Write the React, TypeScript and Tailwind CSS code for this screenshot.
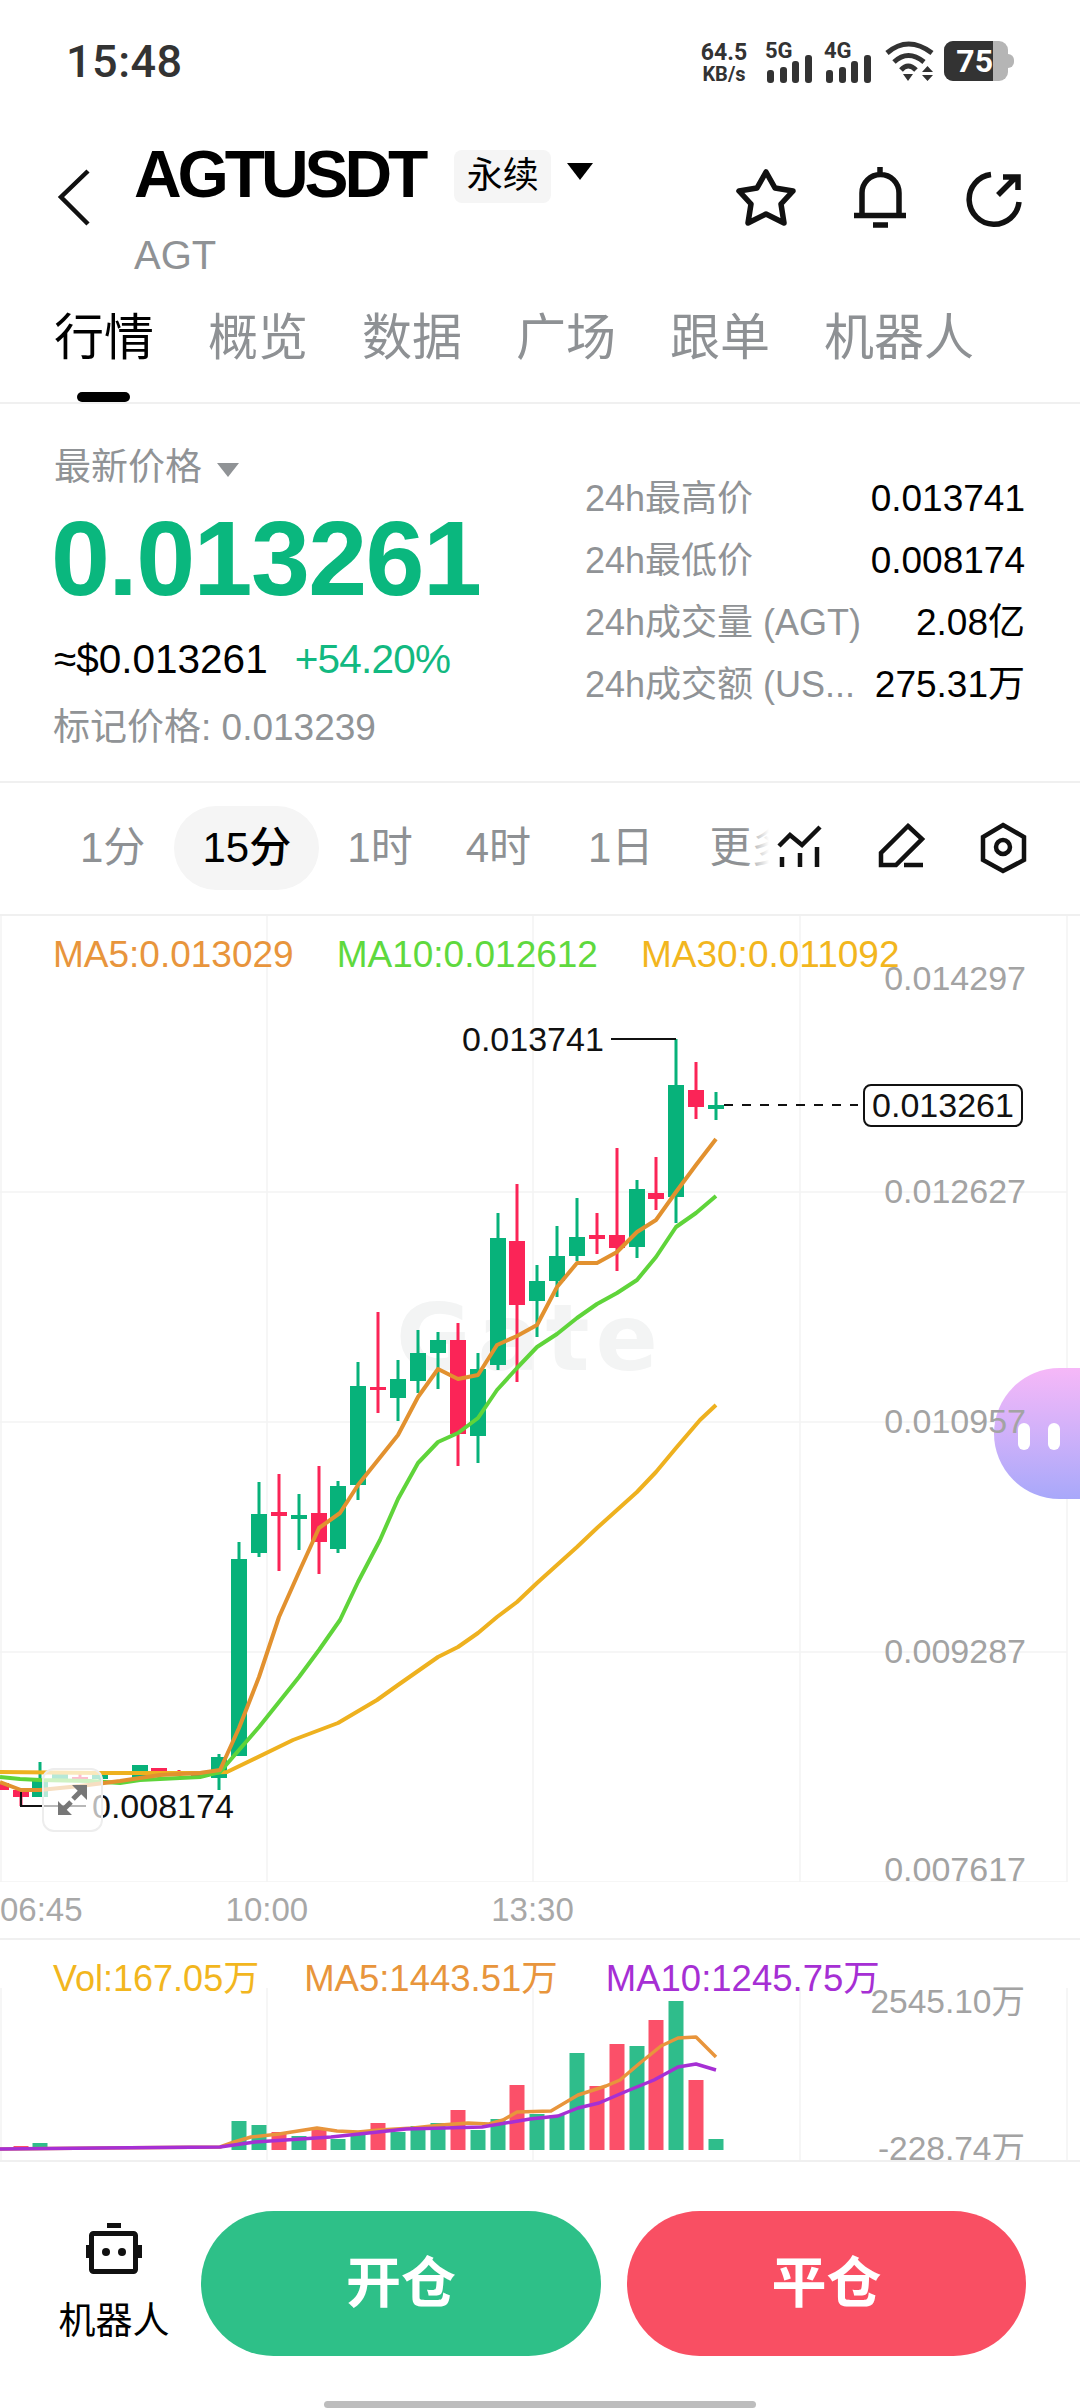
const sans = "font-['Liberation_Sans','Noto_Sans_CJK_SC',sans-serif]"

// x, wick top, wick bottom, body top, body bottom, up?
const candles: [number, number, number, number, number, boolean][] = [
  [1, 1783, 1790, 1783, 1790, false],
  [21, 1790, 1806, 1790, 1797, false],
  [40, 1762, 1797, 1780, 1797, true],
  [60, 1772, 1782, 1774, 1780, true],
  [80, 1774, 1782, 1777, 1780, false],
  [100, 1772, 1780, 1774, 1779, true],
  [140, 1765, 1778, 1765, 1778, true],
  [159, 1768, 1778, 1768, 1775, false],
  [179, 1770, 1776, 1772, 1775, false],
  [199, 1771, 1778, 1772, 1776, false],
  [219, 1754, 1790, 1757, 1778, true],
  [239, 1542, 1756, 1559, 1756, true],
  [259, 1482, 1557, 1514, 1553, true],
  [279, 1474, 1571, 1512, 1516, false],
  [299, 1494, 1550, 1515, 1519, true],
  [319, 1466, 1574, 1513, 1542, false],
  [338, 1481, 1553, 1486, 1549, true],
  [358, 1362, 1500, 1386, 1485, true],
  [378, 1312, 1413, 1387, 1390, false],
  [398, 1360, 1421, 1379, 1398, true],
  [418, 1330, 1393, 1353, 1381, true],
  [438, 1332, 1389, 1340, 1353, true],
  [458, 1323, 1466, 1340, 1434, false],
  [478, 1353, 1463, 1369, 1436, true],
  [498, 1213, 1370, 1238, 1365, true],
  [517, 1184, 1382, 1241, 1305, false],
  [537, 1265, 1337, 1281, 1301, true],
  [557, 1226, 1297, 1256, 1281, true],
  [577, 1198, 1261, 1237, 1256, true],
  [597, 1213, 1254, 1235, 1239, false],
  [617, 1148, 1271, 1235, 1248, false],
  [637, 1180, 1258, 1189, 1247, true],
  [656, 1157, 1210, 1193, 1199, false],
  [676, 1039, 1223, 1085, 1197, true],
  [696, 1062, 1119, 1090, 1107, false],
  [716, 1092, 1120, 1105, 1109, true],
]

const ma5 = '0,1782 21,1790 40,1790 80,1786 120,1781 160,1775 200,1773 220,1770 239,1728 259,1677 279,1617 299,1572 319,1528 340,1513 358,1485 378,1460 398,1435 418,1397 438,1369 458,1379 478,1375 497,1345 517,1336 537,1325 557,1287 577,1263 597,1263 617,1252 637,1232 656,1220 676,1192 696,1165 716,1139'
const ma10 = '0,1777 20,1779 40,1780 90,1781 120,1783 140,1780 200,1777 220,1772 239,1750 259,1727 279,1702 299,1677 319,1650 340,1620 358,1582 380,1540 398,1499 418,1463 438,1442 458,1433 478,1418 497,1390 517,1368 537,1347 557,1334 577,1318 597,1304 617,1293 637,1280 656,1257 676,1227 696,1213 716,1196'
const ma30 = '0,1772 100,1773 200,1773 227,1772 293,1740 338,1723 377,1700 398,1685 438,1657 458,1647 478,1633 497,1617 517,1602 537,1583 557,1565 577,1547 597,1528 617,1510 637,1492 656,1472 676,1448 700,1420 716,1405'

// x, top, up?
const bars: [number, number, boolean][] = [
  [21, 2146, false], [40, 2143, true], [239, 2121, true], [259, 2125, true], [279, 2132, false], [299, 2136, true],
  [319, 2128, false], [338, 2139, true], [358, 2135, true], [378, 2123, false], [398, 2132, true], [418, 2126, true],
  [438, 2123, true], [458, 2110, false], [478, 2130, true], [498, 2119, true], [517, 2085, false], [537, 2114, true],
  [557, 2115, true], [577, 2053, true], [597, 2086, false], [617, 2044, false], [637, 2046, true], [656, 2020, false],
  [676, 2001, true], [696, 2080, false], [716, 2139, true],
]
const volMa5 = '0,2149 100,2148 220,2147 234,2142 251,2137 279,2134 317,2128 337,2131 358,2132 379,2130 413,2128 441,2125 468,2123 489,2124 503,2120 517,2112 551,2111 578,2095 606,2086 620,2080 640,2063 661,2046 678,2038 696,2037 716,2057'
const volMa10 = '0,2149 100,2148 220,2147 255,2142 331,2137 406,2129 482,2127 530,2119 558,2116 578,2108 599,2103 627,2091 654,2080 678,2067 696,2064 716,2070'

function Signal({ label }: { label: string }) {
  return (
    <div className="w-[46px] h-[42px] relative">
      <div className="font-['Roboto',sans-serif] font-bold text-[22px] leading-[20px] text-[#333]">{label}</div>
      <svg viewBox="0 0 46 28" className="absolute bottom-0 left-[2px] w-[46px] h-[28px]" fill="#333">
        <rect x="0" y="15" width="7" height="13" rx="3" />
        <rect x="13" y="12" width="7" height="16" rx="3" />
        <rect x="25" y="6" width="7" height="22" rx="3" />
        <rect x="38" y="0" width="7" height="28" rx="3" />
      </svg>
    </div>
  )
}

function StatusBar() {
  return (
    <div className="h-[124px] flex items-center justify-between pl-[66px] pr-[66px]">
      <span className="font-['Roboto',sans-serif] font-medium text-[45px] text-[#333] tracking-[0.5px]">15:48</span>
      <div className="flex items-center">
        <div className="w-[54px] text-center font-['Roboto',sans-serif] font-bold text-[#333] mr-[14px]">
          <div className="text-[23px] leading-[23px]">64.5</div>
          <div className="text-[20px] leading-[20px]">KB/s</div>
        </div>
        <Signal label="5G" />
        <div className="w-[13px]" />
        <Signal label="4G" />
        <svg viewBox="884 42 50 42" className="w-[50px] h-[42px] ml-[14px]">
          <g fill="none" stroke="#333" strokeWidth="5">
            <path d="M887 54 Q908 36 932 54" />
            <path d="M894 63 Q908 50 924 63" />
            <path d="M901 71 Q908 63 916 71" />
          </g>
          <path d="M903 75 H913 L908 82 Z M922 73 L927.5 67 L933 73 Z M922 76 H933 L927.5 82 Z" fill="#333" />
        </svg>
        <div className="relative ml-[10px] w-[70px] h-[42px]">
          <div className="w-[64px] h-[40px] rounded-[9px] bg-[#b5b5b5] overflow-hidden">
            <div className="w-[49px] h-full bg-[#333] flex items-center justify-end">
              <span className="font-['Roboto',sans-serif] font-bold text-[32px] text-white">75</span>
            </div>
          </div>
          <div className="absolute right-0 top-[13px] w-[6px] h-[14px] rounded-r-md bg-[#b5b5b5]" />
        </div>
      </div>
    </div>
  )
}

function Header() {
  return (
    <div className="h-[166px] flex relative">
      <svg viewBox="56 167 38 62" className="w-[38px] h-[62px] ml-[56px] mt-[43px]" fill="none" stroke="#111" strokeWidth="4.5">
        <path d="M88 171 L61 197 L88 224" />
      </svg>
      <div className="ml-[40px]">
        <div className="flex items-center h-[52px] mt-[24px]">
          <span className="font-bold text-[66px] tracking-[-4.1px] text-black leading-none">AGTUSDT</span>
          <span className="ml-[30px] w-[97px] h-[53px] mt-[4px] rounded-lg bg-[#f5f5f5] flex items-center justify-center text-[36px] text-black">永续</span>
          <span className="ml-[16px] w-0 h-0 border-x-[13px] border-x-transparent border-t-[17px] border-t-black -mt-[6px]" />
        </div>
        <div className="text-[40px] text-[#8f9295] leading-none mt-[35px]">AGT</div>
      </div>
      <svg viewBox="730 160 300 72" className="absolute left-[728px] top-[36px] w-[300px] h-[72px]" fill="none" stroke="#111" strokeWidth="5.5">
        <path strokeLinejoin="round" d="M768 172 L777 188 L795 191 L783 204 L786 223 L768 214 L750 223 L753 204 L741 191 L759 188 Z" />
        <path d="M864 215 V193 a18.5 18.5 0 0 1 37 0 V215 M856 215.5 H908 M882 167 V174 M875 225 H890" />
        <path d="M993 174.5 A25 25 0 1 0 1021 202 M1000 195 L1018 177 M1005 177 H1020 V190" />
      </svg>
    </div>
  )
}

function Tabs() {
  const items = ['行情', '概览', '数据', '广场', '跟单', '机器人']
  return (
    <div className="h-[114px] border-b-2 border-[#f0f0f0] relative flex gap-[54px] pl-[54px] pt-[19px]">
      {items.map((t, i) => (
        <span key={t} className={`text-[50px] leading-[58px] ${i === 0 ? 'text-black' : 'text-[#8e9194]'}`}>{t}</span>
      ))}
      <div className="absolute left-[77px] bottom-0 w-[53px] h-[10px] rounded-full bg-black" />
    </div>
  )
}

function StatRow({ label, value }: { label: string; value: string }) {
  return (
    <div className="h-[62px] flex items-center justify-between">
      <span className="text-[36px] text-[#909396]">{label}</span>
      <span className="text-[37px] text-black">{value}</span>
    </div>
  )
}

function PriceInfo() {
  return (
    <div className="h-[379px] border-b-2 border-[#f0f0f0] flex">
      <div className="w-[585px] pl-[54px] pt-[46px]">
        <div className="h-[36px] flex items-center text-[37px] text-[#909396]">
          最新价格
          <span className="ml-[15px] mt-[3px] w-0 h-0 border-x-[11px] border-x-transparent border-t-[14px] border-t-[#909396]" />
        </div>
        <div className="h-[104px] mt-[20px] -ml-[3px] flex items-center font-bold text-[106px] text-[#0ab77e] tracking-[-1.6px] leading-none">0.013261</div>
        <div className="h-[48px] mt-[25px] flex items-center text-[40.5px]">
          <span className="text-black">≈$0.013261</span>
          <span className="ml-[27px] text-[#12b981] tracking-[-0.8px]">+54.20%</span>
        </div>
        <div className="h-[40px] mt-[25px] -ml-[1px] flex items-center text-[37px] text-[#909396]">标记价格: 0.013239</div>
      </div>
      <div className="w-[440px] pt-[64px]">
        <StatRow label="24h最高价" value="0.013741" />
        <StatRow label="24h最低价" value="0.008174" />
        <StatRow label="24h成交量 (AGT)" value="2.08亿" />
        <StatRow label="24h成交额 (US..." value="275.31万" />
      </div>
    </div>
  )
}

function Timeframes() {
  return (
    <div className="h-[133px] border-b-2 border-[#f0f0f0] flex items-center text-[42px] text-[#8e9194] relative pb-[2px]">
      <span className="ml-[80px]">1分</span>
      <span className="ml-[29px] w-[145px] h-[84px] rounded-full bg-[#f5f5f5] flex items-center justify-center text-black font-medium">15分</span>
      <span className="ml-[28px]">1时</span>
      <span className="ml-[53px]">4时</span>
      <span className="ml-[57px]">1日</span>
      <div className="ml-[56px] w-[60px] h-[50px] overflow-hidden relative whitespace-nowrap leading-[50px]">
        更多
        <div className="absolute inset-y-0 right-0 w-[24px] bg-gradient-to-r from-white/0 to-white" />
      </div>
      <svg viewBox="775 820 255 56" className="absolute left-[774px] top-[37px] w-[255px] h-[56px]" fill="none" stroke="#111" strokeWidth="4.5">
        <path d="M780 846 L791 835 L803 845 L821 827 M783 857 V867 M801 853 V867 M818 847 V867" />
        <path d="M909 826 L923 839 L897 865 H882 V853 Z M905 865 H924" />
        <path d="M1004 825 L1025 837 V860 L1004 871 L984 860 V837 Z" />
        <circle cx="1004" cy="847" r="7" />
      </svg>
    </div>
  )
}

function CandleChart() {
  return (
    <div className="h-[966px] relative overflow-hidden">
      <div className="absolute left-[396px] top-[377px] font-['DejaVu_Sans',sans-serif] font-bold text-[92px] tracking-[6px] text-[#f3f4f4] leading-none">Gate</div>
      <svg viewBox="0 916 1080 966" className="absolute inset-0 w-[1080px] h-[966px]" fill="none">
        <g stroke="#f3f4f4" strokeWidth="1.5">
          <path d="M1 916 V1882 M267 916 V1882 M533 916 V1882 M800 916 V1882 M1067 916 V1882" />
          <path d="M0 1192 H1067 M0 1422 H1067 M0 1652 H1067 M0 1882 H1067" />
        </g>
        {candles.map(([x, wt, wb, bt, bb, up]) => {
          const color = up ? '#07b27a' : '#fb2457'
          return (
            <g key={x} fill={color}>
              <rect x={x - 1.5} y={wt} width="3" height={wb - wt} />
              <rect x={x - 8} y={bt} width="16" height={bb - bt} />
            </g>
          )
        })}
        <polyline points={ma30} stroke="#eeb11f" strokeWidth="4" strokeLinejoin="round" />
        <polyline points={ma10} stroke="#5fd43a" strokeWidth="4" strokeLinejoin="round" />
        <polyline points={ma5} stroke="#e2912f" strokeWidth="4" strokeLinejoin="round" />
        <path d="M611 1039 H676" stroke="#111" strokeWidth="2" />
        <path d="M21 1792 V1806 H86" stroke="#111" strokeWidth="2" />
        <path d="M724 1105 H858" stroke="#111" strokeWidth="2" strokeDasharray="9 9" />
      </svg>

      <div className="relative flex gap-[43px] pl-[53px] pt-[16px] text-[37px] leading-[46px]">
        <span className="text-[#e8953c]">MA5:0.013029</span>
        <span className="text-[#5fd93e]">MA10:0.012612</span>
        <span className="text-[#f2b61e]">MA30:0.011092</span>
      </div>

      <div className="absolute left-[994px] top-[452px] w-[86px] h-[131px] rounded-l-full bg-gradient-to-b from-[#f6b8f8] to-[#a8a8fa] flex items-center gap-[18px] pl-[24px] pt-[6px]">
        <div className="w-[12px] h-[27px] rounded-full bg-white" />
        <div className="w-[12px] h-[27px] rounded-full bg-white" />
      </div>

      <div className="absolute right-[54px] top-[62px] -translate-y-1/2 text-[34px] text-[#a3a3a3]">0.014297</div>
      <div className="absolute right-[54px] top-[275px] -translate-y-1/2 text-[34px] text-[#a3a3a3]">0.012627</div>
      <div className="absolute right-[54px] top-[505px] -translate-y-1/2 text-[34px] text-[#a3a3a3]">0.010957</div>
      <div className="absolute right-[54px] top-[735px] -translate-y-1/2 text-[34px] text-[#a3a3a3]">0.009287</div>
      <div className="absolute right-[54px] top-[953px] -translate-y-1/2 text-[34px] leading-none text-[#a3a3a3]">0.007617</div>

      <div className="absolute left-[462px] top-[123px] -translate-y-1/2 text-[34px] text-[#111]">0.013741</div>
      <div className="absolute left-[92px] top-[890px] -translate-y-1/2 text-[34px] text-[#111]">0.008174</div>
      <div className="absolute left-[863px] top-[168px] w-[160px] h-[43px] rounded-lg border-2 border-[#111] bg-white flex items-center justify-center text-[34px] text-[#111]">0.013261</div>

      <div className="absolute left-[42px] top-[852px] w-[61px] h-[64px] rounded-xl border-2 border-[#ededed] bg-white/70">
        <svg viewBox="0 0 61 64" className="absolute -left-[2px] -top-[2px] w-[61px] h-[64px]" fill="#777">
          <path d="M45 17 V32 L30 17 Z M16 47 V33 L30 47 Z" />
          <path d="M39 23 L31 31 M22 41 L29 34" stroke="#777" strokeWidth="5" />
        </svg>
      </div>
    </div>
  )
}

function TimeAxis() {
  return (
    <div className="h-[58px] border-b-2 border-[#f0f0f0] flex items-center text-[33px] text-[#a8a8a8]">
      <span>06:45</span>
      <span className="ml-[143px]">10:00</span>
      <span className="ml-[183px]">13:30</span>
    </div>
  )
}

function VolumeChart() {
  return (
    <div className="h-[222px] border-b-2 border-[#f0f0f0] relative overflow-hidden">
      <svg viewBox="0 1940 1080 220" className="absolute inset-0 w-[1080px] h-[220px]" fill="none">
        <path d="M1 1988 V2160 M267 1988 V2160 M533 1988 V2160 M800 1988 V2160 M1067 1988 V2160" stroke="#f3f4f4" strokeWidth="1.5" />
        {bars.map(([x, top, up]) => (
          <rect key={x} x={x - 7.5} y={top} width="15" height={2150 - top} fill={up ? '#2fbd8b' : '#fb5069'} />
        ))}
        <polyline points={volMa5} stroke="#e8953c" strokeWidth="3.5" strokeLinejoin="round" />
        <polyline points={volMa10} stroke="#a62fd4" strokeWidth="3.5" strokeLinejoin="round" />
      </svg>
      <div className="relative flex pl-[53px] pt-[16px] text-[36.5px] leading-[46px]">
        <span className="text-[#f2b61e] text-[36px]">Vol:167.05万</span>
        <span className="ml-[45px] text-[#e8953c]">MA5:1443.51万</span>
        <span className="ml-[48px] text-[#a62fd4]">MA10:1245.75万</span>
      </div>
      <div className="absolute right-[55px] top-[62px] -translate-y-1/2 text-[33.5px] text-[#a3a3a3]">2545.10万</div>
      <div className="absolute right-[55px] top-[209px] -translate-y-1/2 text-[33.5px] text-[#a3a3a3]">-228.74万</div>
    </div>
  )
}

function BottomBar() {
  return (
    <div className="h-[246px] relative flex pt-[49px] pl-[60px]">
      <div className="w-[108px] flex flex-col items-center pt-[12px]">
        <svg viewBox="86 2223 56 52" className="w-[56px] h-[52px]" fill="none">
          <rect x="107" y="2223" width="14" height="5" fill="#111" />
          <rect x="91.5" y="2233.5" width="44" height="38" rx="2" stroke="#111" strokeWidth="5" />
          <rect x="86" y="2245" width="4" height="13" fill="#111" />
          <rect x="138" y="2245" width="4" height="13" fill="#111" />
          <circle cx="106" cy="2252" r="4" fill="#111" />
          <circle cx="122" cy="2252" r="4" fill="#111" />
        </svg>
        <span className="mt-[27px] text-[37px] leading-[40px] text-black whitespace-nowrap">机器人</span>
      </div>
      <button className="ml-[33px] w-[400px] h-[145px] rounded-full bg-[#2ec088] text-white font-bold text-[55px]">开仓</button>
      <button className="ml-[26px] w-[399px] h-[145px] rounded-full bg-[#f94f63] text-white font-bold text-[55px]">平仓</button>
      <div className="absolute left-[324px] bottom-0 w-[432px] h-[7px] rounded-full bg-[#bdbdbd]" />
    </div>
  )
}

export default function App() {
  return (
    <div className={`w-[1080px] h-[2408px] bg-white overflow-hidden ${sans}`}>
      <StatusBar />
      <Header />
      <Tabs />
      <PriceInfo />
      <Timeframes />
      <CandleChart />
      <TimeAxis />
      <VolumeChart />
      <BottomBar />
    </div>
  )
}
